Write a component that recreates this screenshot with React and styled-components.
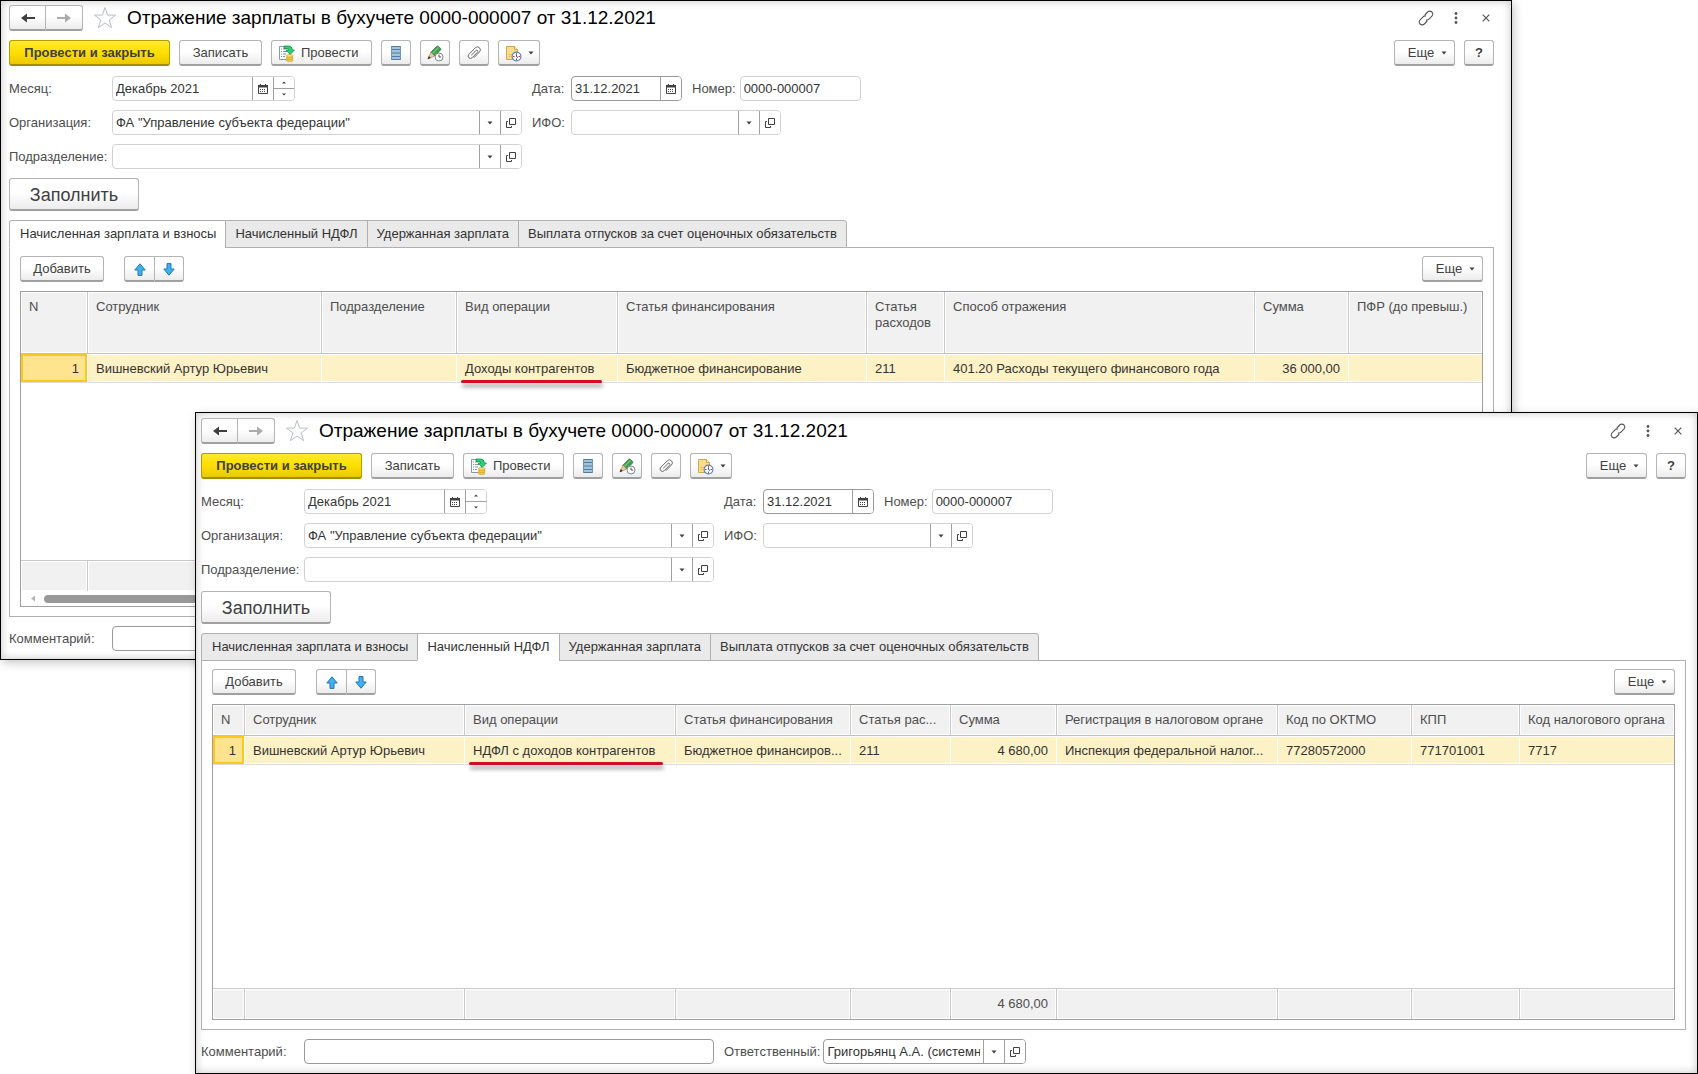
import styled, { createGlobalStyle, css } from "styled-components";

const GlobalStyle = createGlobalStyle`
  * {
    box-sizing: border-box;
  }
  body {
    margin: 0;
    background: #fff;
    color: #404040;
    font-family: "Liberation Sans", Arial, sans-serif;
    font-size: 13px;
    line-height: 16px;
  }
  button,
  input {
    font: inherit;
    color: inherit;
    margin: 0;
  }
`;

const Desktop = styled.main`
  position: relative;
  height: 100vh;
  min-height: 900px;
  overflow: hidden;
`;

const WindowFrame = styled.section`
  position: absolute;
  display: flex;
  flex-direction: column;
  background: #fff;
  border: 1px solid #000;
  box-shadow: inset 0 0 9px rgba(70, 60, 70, 0.3), 2px 3px 9px rgba(0, 0, 0, 0.22);
  ${(p) =>
    p.$front
      ? css`
          inset: 412px 0 0 195px;
          padding: 6px 11px 9px 5px;
        `
      : css`
          inset: 0 186px 414px 0;
          padding: 5px 17px 8px 8px;
        `}
`;

const TitleBar = styled.header`
  display: flex;
  align-items: center;
  height: 24px;
  margin-bottom: 10px;
`;

const Title = styled.h1`
  flex: 1;
  margin: 0;
  color: #000;
  font-size: 19px;
  font-weight: 400;
  line-height: 24px;
`;

const WindowTools = styled.div`
  display: flex;
  align-items: center;
  gap: 8px;
  margin-right: -3px;
`;

const PlainButton = styled.button`
  display: flex;
  align-items: center;
  justify-content: center;
  width: ${(p) => p.$width || 22}px;
  height: 22px;
  padding: 0;
  border: 0;
  background: none;
`;

const Button = styled.button`
  display: flex;
  align-items: center;
  justify-content: center;
  gap: ${(p) => p.$gap || 6}px;
  width: ${(p) => p.$width}px;
  height: 26px;
  padding: 1px 0 0 0;
  border: 1px solid #b4b4b4;
  border-bottom: 2px solid #a0a0a0;
  border-radius: 3px;
  background: linear-gradient(#fff 45%, #ececec);
  color: #404040;
  white-space: nowrap;
`;

const PrimaryButton = styled(Button)`
  border-color: #b39b00;
  border-bottom-color: #a38c00;
  background: linear-gradient(#ffea2e, #ffdf00 50%, #ecc900);
  font-weight: 700;
`;

const PostButton = styled(Button)`
  justify-content: flex-start;
  padding-left: 6px;
`;

const MenuButton = styled(Button)`
  padding-left: 6px;
`;

const FillButton = styled(Button)`
  height: 33px;
  margin: 9px 0;
  font-size: 18px;
`;

const ButtonPair = styled.div`
  display: flex;
  margin-left: ${(p) => p.$indent || 0}px;

  ${Button}:first-child {
    border-radius: 3px 0 0 3px;
  }
  ${Button}:last-child {
    border-left: 0;
    border-radius: 0 3px 3px 0;
  }
`;

const CommandBar = styled.div`
  display: flex;
  gap: 9px;
  margin-bottom: ${(p) => p.$bottom || 10}px;
`;

const Spacer = styled.div`
  flex: 1;
`;

const FormGrid = styled.div`
  display: grid;
  grid-template-columns: 103px 420px 39px auto;
  row-gap: 9px;
  align-items: center;
  justify-content: start;
`;

const FieldGroup = styled.div`
  display: flex;
  align-items: center;

  ${() => Label} {
    margin: 0 4px 0 10px;
  }
`;

const Label = styled.label`
  color: #4d4d4d;
  white-space: nowrap;
`;

const Field = styled.div`
  display: flex;
  width: ${(p) => p.$width}px;
  height: 25px;
  border: 1px solid ${(p) => (p.$dark ? "#9a9a9a" : "#d2d2d2")};
  border-radius: 4px;
  background: #fff;
  overflow: hidden;
`;

const TextInput = styled.input`
  flex: 1;
  min-width: 0;
  padding: 0 3px;
  border: 0;
  outline: 0;
  background: none;
  color: #333;
`;

const FieldButton = styled.button`
  display: flex;
  align-items: center;
  justify-content: center;
  width: 21px;
  padding: 0;
  border: 0;
  border-left: 1px solid #a0a0a0;
  background: #fff;
`;

const Spinner = styled.div`
  display: flex;
  flex-direction: column;
  width: 21px;
  border-left: 1px solid #a0a0a0;
`;

const SpinButton = styled.button`
  display: flex;
  flex: 1;
  align-items: center;
  justify-content: center;
  padding: 0;
  border: 0;
  background: #fff;

  & + & {
    border-top: 1px solid #a0a0a0;
  }
`;

const Tabs = styled.div`
  display: flex;
  margin-bottom: -1px;
  z-index: 1;
`;

const Tab = styled.button`
  height: 28px;
  padding: 0 9px 0 10px;
  border: 1px solid #b0b0b0;
  border-bottom-color: ${(p) => (p.$active ? "#fff" : "#b0b0b0")};
  background: ${(p) => (p.$active ? "#fff" : "#eaeaea")};
  color: #333;
  white-space: nowrap;

  & + & {
    margin-left: -1px;
    padding-left: 9px;
  }
  &:first-child {
    border-top-left-radius: 3px;
  }
  &:last-child {
    border-top-right-radius: 3px;
  }
`;

const Panel = styled.div`
  display: flex;
  flex: 1;
  flex-direction: column;
  min-height: 0;
  padding: 8px 10px 9px;
  border: 1px solid #b0b0b0;
`;

const TableBox = styled.div`
  display: flex;
  flex: 1;
  flex-direction: column;
  min-height: 0;
  border: 1px solid #a0a0a0;
`;

const TableArea = styled.div`
  flex: 1;
  min-height: 0;
`;

const Table = styled.table`
  width: 100%;
  height: 100%;
  border-collapse: separate;
  border-spacing: 0;
  table-layout: fixed;
`;

const cell = css`
  padding: 0 8px;
  overflow: hidden;
  text-align: left;
  font-weight: 400;

  &:last-child {
    border-right: 0;
  }
`;

const HeadCell = styled.th`
  ${cell}
  height: ${(p) => p.$height}px;
  padding-top: 7px;
  border-right: 1px solid #c8c8c8;
  border-bottom: 1px solid #c0c0c0;
  background: #f1f1f1;
  box-shadow: inset 0 0 0 1px #fff;
  color: #4d4d4d;
  vertical-align: top;
  white-space: ${(p) => (p.$wrap ? "normal" : "nowrap")};
`;

const Cell = styled.td`
  ${cell}
  height: 29px;
  padding-top: 2px;
  border-right: 1px solid #fff;
  border-bottom: 1px solid #dcdce0;
  background: #fdf1c6;
  box-shadow: inset 0 1px #fff, inset 0 -1px #fff;
  color: #333;
  text-align: ${(p) => (p.$right ? "right" : "left")};
  white-space: nowrap;
  ${(p) => p.$marked && "overflow: visible;"}
  ${(p) =>
    p.$selected &&
    css`
      background: #ffe48f;
      box-shadow: inset 0 0 0 2px #fcc71f;
      text-align: right;
    `}
`;

const EmptyCell = styled.td`
  padding: 0;
`;

const FootCell = styled.td`
  ${cell}
  height: 31px;
  border-top: 1px solid #c8c8c8;
  border-right: 1px solid #c8c8c8;
  background: #f1f1f1;
  box-shadow: inset 0 0 0 1px #fff;
  color: #4d4d4d;
  text-align: right;
`;

// Red pen stroke drawn under the highlighted operation
const Marked = styled.span`
  position: relative;

  &::after {
    content: "";
    position: absolute;
    left: -4px;
    right: -8px;
    bottom: -7px;
    height: 3px;
    border-radius: 2px;
    background: #d40d27;
    box-shadow: 1px 4px 4px rgba(0, 0, 0, 0.4);
  }
`;

const ScrollRow = styled.div`
  display: flex;
  align-items: center;
  gap: 9px;
  height: 15px;
  padding: 0 10px;
`;

const ScrollThumb = styled.div`
  width: 75%;
  height: 8px;
  border-radius: 4px;
  background: #999;
`;

const BottomRow = styled.footer`
  display: flex;
  align-items: center;
  margin-top: 9px;

  ${Label}:first-child {
    width: 103px;
  }
  ${Label}:not(:first-child) {
    margin: 0 3px 0 10px;
  }
`;

function ArrowIcon({ back }) {
  return (
    <svg width="16" height="12" viewBox="0 0 16 12">
      <path d={back ? "M15 6H4" : "M1 6h11"} stroke={back ? "#404040" : "#ababab"} strokeWidth="2" />
      <path d={back ? "M1 6l6-4.500v9z" : "M15 6 9 1.500v9z"} fill={back ? "#404040" : "#ababab"} />
    </svg>
  );
}

function StarIcon() {
  return (
    <svg width="24" height="24" viewBox="0 0 24 24">
      <path
        d="M12 1.500l2.600 7.600h8l-6.400 4.800 2.400 7.800L12 17l-6.600 4.700 2.400-7.800L1.400 9.100h8z"
        fill="#fff"
        stroke="#b9bec6"
      />
    </svg>
  );
}

function LinkIcon() {
  return (
    <svg width="16" height="16" viewBox="0 0 16 16" fill="none" stroke="#555" strokeWidth="1.100">
      <path d="M6.800 5 9.700 2a2.900 2.900 0 0 1 4.200 0 2.900 2.900 0 0 1 0 4.200l-3 3a2.900 2.900 0 0 1-3 .7" />
      <path d="M9.200 11 6.300 14a2.900 2.900 0 0 1-4.200 0 2.900 2.900 0 0 1 0-4.200l3-3a2.900 2.900 0 0 1 3-.7" />
    </svg>
  );
}

function DotsIcon() {
  return (
    <svg width="4" height="12" viewBox="0 0 4 12" fill="#555">
      <circle cx="2" cy="1.500" r="1.400" />
      <circle cx="2" cy="6" r="1.400" />
      <circle cx="2" cy="10.500" r="1.400" />
    </svg>
  );
}

function CloseIcon() {
  return (
    <svg width="8" height="8" viewBox="0 0 8 8">
      <path d="M.7.7l6.600 6.600M7.300.7.7 7.300" stroke="#555" strokeWidth="1.200" />
    </svg>
  );
}

function PostIcon() {
  return (
    <svg width="17" height="17" viewBox="0 0 17 17">
      <path d="M1.500 1.500h10v13h-10z" fill="#fff" stroke="#8798a8" />
      <path d="M3 4h1M5 4h3M3 6.500h1M5 6.500h4M3 9h1M5 9h3M3 11.500h1M5 11.500h2" stroke="#7d92a5" />
      <path
        d="M6 1h4.500q3.800 0 3.800 4h2.200L12.200 9.500 8 5h2.800q0-1.500-1.800-1.500H6z"
        fill="#2bd174"
        stroke="#0b8f4a"
        strokeWidth=".8"
      />
      <path d="M8.500 10.500h6.500v5H8.500z" fill="#f6cf4a" />
      <ellipse cx="11.700" cy="15.200" rx="3.400" ry="1.300" fill="#f6cf4a" stroke="#c69a1c" strokeWidth=".6" />
      <ellipse cx="11.700" cy="13" rx="3.400" ry="1.300" fill="#f6cf4a" stroke="#c69a1c" strokeWidth=".6" />
      <ellipse cx="11.700" cy="10.800" rx="3.400" ry="1.300" fill="#fbe07a" stroke="#c69a1c" strokeWidth=".6" />
    </svg>
  );
}

function ListIcon() {
  return (
    <svg width="10" height="14" viewBox="0 0 10 14">
      <path d="M0 0h10v14H0z" fill="#a3c3da" />
      <path d="M0 .5h10M0 3.500h10M0 7h10M0 10.500h10M0 13.500h10" stroke="#4f7da1" />
      <path d="M.5 0v14M9.500 0v14" stroke="#6d97b8" />
    </svg>
  );
}

function PencilIcon() {
  return (
    <svg width="17" height="17" viewBox="0 0 17 17">
      <path d="M3.800 7.200 9.600 1.400a1.300 1.300 0 0 1 1.900 0l1.900 1.900a1.300 1.300 0 0 1 0 1.900L7.600 11z" fill="#3f9d4b" stroke="#2c6f36" strokeWidth=".7" />
      <path d="M5.500 8.500l6-6" stroke="#74c47c" strokeWidth="1.200" />
      <path d="M3.800 7.200 7.600 11 1 13.800z" fill="#efcf9c" stroke="#8a7652" strokeWidth=".6" />
      <path d="M.6 14.200l1.200-3.200 2 2z" fill="#333" />
      <circle cx="12" cy="12" r="4" fill="#fff" stroke="#7d8b99" />
      <path d="M12 9.500V12h2.300" fill="none" stroke="#4a5560" />
    </svg>
  );
}

function ClipIcon() {
  return (
    <svg width="14" height="14" viewBox="0 0 14 14" fill="none" stroke="#6a6a6a">
      <path d="M4.300 9.200 9 4.500a1.100 1.100 0 0 1 1.600 1.600l-5.400 5.600a2.300 2.300 0 0 1-3.400-3.300l6.500-6.600a2.900 2.900 0 0 1 4.200 4.100l-5.600 5.800" />
    </svg>
  );
}

function ReportIcon() {
  return (
    <svg width="17" height="17" viewBox="0 0 17 17">
      <path d="M1.500 1.500h8l3 3v10h-11z" fill="#f9dc8c" stroke="#d3a84a" />
      <path d="M9.500 1.500v3h3" fill="#fff3cc" stroke="#d3a84a" />
      <path d="M3.500 9.500h3M3.500 11.500h2" stroke="#e3bd62" />
      <circle cx="11.500" cy="11.500" r="4.400" fill="#fff" stroke="#5585b5" strokeWidth="1.200" />
      <path d="M11.500 8v1.500M11.500 13.500V15M8 11.500h1.500M13.500 11.500H15" stroke="#d33" />
      <path d="M11.500 9.500v2l1.500 1" fill="none" stroke="#2d5f93" />
    </svg>
  );
}

function Caret() {
  return (
    <svg width="6" height="4" viewBox="0 0 6 4">
      <path d="M.5.500h5L3 3.500z" fill="#404040" />
    </svg>
  );
}

function SmallCaret({ up }) {
  return (
    <svg width="4" height="3" viewBox="0 0 4 3">
      <path d={up ? "M0 2.500h4L2 .500z" : "M0 .500h4L2 2.500z"} fill="#404040" />
    </svg>
  );
}

function CalendarIcon() {
  return (
    <svg width="10" height="10" viewBox="0 0 10 10">
      <path d="M.5 1.500h9v8h-9z" fill="#fff" stroke="#404040" />
      <path d="M0 1h10v2.500H0zM2 0h1v2H2zM7 0h1v2H7z" fill="#404040" />
      <path d="M2 5.500h6M2 7.500h6" stroke="#404040" strokeDasharray="1 1" />
    </svg>
  );
}

function OpenIcon() {
  return (
    <svg width="10" height="10" viewBox="0 0 10 10" fill="none" stroke="#404040">
      <path d="M3.500.500h6v6h-6zM2 3.500H.5v6h5V8" />
    </svg>
  );
}

function MoveIcon({ down }) {
  return (
    <svg width="12" height="13" viewBox="0 0 12 13">
      <path
        d={
          down
            ? "M4 .600h4v5.400h3.200L6 12.200.8 6H4z"
            : "M4 12.400h4V7h3.200L6 .800.8 7H4z"
        }
        fill="#3fb2f2"
        stroke="#2377b0"
      />
    </svg>
  );
}

function ScrollArrow() {
  return (
    <svg width="4" height="7" viewBox="0 0 4 7">
      <path d="M4 .500v6L0 3.500z" fill="#b5b5b5" />
    </svg>
  );
}

function MoreButton() {
  return (
    <MenuButton type="button" $width={61} $gap={7}>
      Еще <Caret />
    </MenuButton>
  );
}

function ChoiceField({ id, value = "", width, dark }) {
  return (
    <Field $width={width} $dark={dark}>
      <TextInput id={id} defaultValue={value} />
      <FieldButton type="button" aria-label="Выбрать">
        <Caret />
      </FieldButton>
      <FieldButton type="button" aria-label="Открыть">
        <OpenIcon />
      </FieldButton>
    </Field>
  );
}

const TAB_NAMES = [
  "Начисленная зарплата и взносы",
  "Начисленный НДФЛ",
  "Удержанная зарплата",
  "Выплата отпусков за счет оценочных обязательств",
];

const SALARY_COLUMNS = [
  { title: "N", width: 67, value: "1", selected: true },
  { title: "Сотрудник", width: 234, value: "Вишневский Артур Юрьевич" },
  { title: "Подразделение", width: 135, value: "" },
  { title: "Вид операции", width: 161, value: "Доходы контрагентов", marked: true },
  { title: "Статья финансирования", width: 249, value: "Бюджетное финансирование" },
  { title: "Статья расходов", width: 78, value: "211", wrap: true },
  { title: "Способ отражения", width: 310, value: "401.20 Расходы текущего финансового года" },
  { title: "Сумма", width: 94, value: "36 000,00", right: true },
  { title: "ПФР (до превыш.)", value: "" },
];

const TAX_COLUMNS = [
  { title: "N", width: 32, value: "1", selected: true },
  { title: "Сотрудник", width: 220, value: "Вишневский Артур Юрьевич" },
  { title: "Вид операции", width: 211, value: "НДФЛ с доходов контрагентов", marked: true },
  { title: "Статья финансирования", width: 175, value: "Бюджетное финансиров..." },
  { title: "Статья рас...", width: 100, value: "211" },
  { title: "Сумма", width: 106, value: "4 680,00", right: true, total: "4 680,00" },
  { title: "Регистрация в налоговом органе", width: 221, value: "Инспекция федеральной налог..." },
  { title: "Код по ОКТМО", width: 134, value: "77280572000" },
  { title: "КПП", width: 108, value: "771701001" },
  { title: "Код налогового органа", value: "7717" },
];

function DataTable({ columns, headHeight, scroll }) {
  return (
    <TableBox>
      <TableArea>
        <Table>
          <colgroup>
            {columns.map((c) => (
              <col key={c.title} width={c.width} />
            ))}
          </colgroup>
          <thead>
            <tr>
              {columns.map((c) => (
                <HeadCell key={c.title} $height={headHeight} $wrap={c.wrap}>
                  {c.title}
                </HeadCell>
              ))}
            </tr>
          </thead>
          <tbody>
            <tr>
              {columns.map((c) => (
                <Cell key={c.title} $right={c.right} $marked={c.marked} $selected={c.selected}>
                  {c.marked ? <Marked>{c.value}</Marked> : c.value}
                </Cell>
              ))}
            </tr>
            <tr>
              <EmptyCell colSpan={columns.length} />
            </tr>
          </tbody>
          <tfoot>
            <tr>
              {columns.map((c) => (
                <FootCell key={c.title}>{c.total}</FootCell>
              ))}
            </tr>
          </tfoot>
        </Table>
      </TableArea>
      {scroll && (
        <ScrollRow>
          <ScrollArrow />
          <ScrollThumb />
        </ScrollRow>
      )}
    </TableBox>
  );
}

function DocumentWindow({ id, front, activeTab, columns, headHeight, scroll }) {
  return (
    <WindowFrame $front={front}>
      <TitleBar>
        <ButtonPair>
          <Button type="button" $width={37} aria-label="Назад">
            <ArrowIcon back />
          </Button>
          <Button type="button" $width={37} aria-label="Вперед">
            <ArrowIcon />
          </Button>
        </ButtonPair>
        <PlainButton type="button" $width={44} aria-label="В избранное">
          <StarIcon />
        </PlainButton>
        <Title>Отражение зарплаты в бухучете 0000-000007 от 31.12.2021</Title>
        <WindowTools>
          <PlainButton type="button" aria-label="Ссылка">
            <LinkIcon />
          </PlainButton>
          <PlainButton type="button" aria-label="Меню">
            <DotsIcon />
          </PlainButton>
          <PlainButton type="button" aria-label="Закрыть">
            <CloseIcon />
          </PlainButton>
        </WindowTools>
      </TitleBar>

      <CommandBar>
        <PrimaryButton type="button" $width={161}>
          Провести и закрыть
        </PrimaryButton>
        <Button type="button" $width={83}>
          Записать
        </Button>
        <PostButton type="button" $width={101}>
          <PostIcon />
          Провести
        </PostButton>
        <Button type="button" $width={30} aria-label="Движения документа">
          <ListIcon />
        </Button>
        <Button type="button" $width={30} aria-label="Исправления">
          <PencilIcon />
        </Button>
        <Button type="button" $width={30} aria-label="Файлы">
          <ClipIcon />
        </Button>
        <Button type="button" $width={42} aria-label="Отчеты">
          <ReportIcon />
          <Caret />
        </Button>
        <Spacer />
        <MoreButton />
        <Button type="button" $width={30}>
          <b>?</b>
        </Button>
      </CommandBar>

      <FormGrid>
        <Label htmlFor={`${id}-month`}>Месяц:</Label>
        <Field $width={183}>
          <TextInput id={`${id}-month`} defaultValue="Декабрь 2021" />
          <FieldButton type="button" aria-label="Календарь">
            <CalendarIcon />
          </FieldButton>
          <Spinner>
            <SpinButton type="button" aria-label="Больше">
              <SmallCaret up />
            </SpinButton>
            <SpinButton type="button" aria-label="Меньше">
              <SmallCaret />
            </SpinButton>
          </Spinner>
        </Field>
        <Label htmlFor={`${id}-date`}>Дата:</Label>
        <FieldGroup>
          <Field $width={111} $dark>
            <TextInput id={`${id}-date`} defaultValue="31.12.2021" />
            <FieldButton type="button" aria-label="Календарь">
              <CalendarIcon />
            </FieldButton>
          </Field>
          <Label htmlFor={`${id}-number`}>Номер:</Label>
          <Field $width={121}>
            <TextInput id={`${id}-number`} defaultValue="0000-000007" />
          </Field>
        </FieldGroup>

        <Label htmlFor={`${id}-org`}>Организация:</Label>
        <ChoiceField id={`${id}-org`} width={410} value={'ФА "Управление субъекта федерации"'} />
        <Label htmlFor={`${id}-ifo`}>ИФО:</Label>
        <ChoiceField id={`${id}-ifo`} width={210} />

        <Label htmlFor={`${id}-dept`}>Подразделение:</Label>
        <ChoiceField id={`${id}-dept`} width={410} />
      </FormGrid>

      <FillButton type="button" $width={130}>
        Заполнить
      </FillButton>

      <Tabs role="tablist">
        {TAB_NAMES.map((name, i) => (
          <Tab key={name} type="button" role="tab" aria-selected={i === activeTab} $active={i === activeTab}>
            {name}
          </Tab>
        ))}
      </Tabs>

      <Panel>
        <CommandBar $bottom={9}>
          <Button type="button" $width={84}>
            Добавить
          </Button>
          <ButtonPair $indent={11}>
            <Button type="button" $width={31} aria-label="Вверх">
              <MoveIcon />
            </Button>
            <Button type="button" $width={29} aria-label="Вниз">
              <MoveIcon down />
            </Button>
          </ButtonPair>
          <Spacer />
          <MoreButton />
        </CommandBar>
        <DataTable columns={columns} headHeight={headHeight} scroll={scroll} />
      </Panel>

      <BottomRow>
        <Label htmlFor={`${id}-comment`}>Комментарий:</Label>
        <Field $width={410} $dark>
          <TextInput id={`${id}-comment`} />
        </Field>
        <Label htmlFor={`${id}-user`}>Ответственный:</Label>
        <ChoiceField id={`${id}-user`} width={203} value="Григорьянц А.А. (системный)" dark />
      </BottomRow>
    </WindowFrame>
  );
}

export default function App() {
  return (
    <>
      <GlobalStyle />
      <Desktop>
        <DocumentWindow id="salary" activeTab={0} columns={SALARY_COLUMNS} headHeight={62} scroll />
        <DocumentWindow id="tax" front activeTab={1} columns={TAX_COLUMNS} headHeight={31} />
      </Desktop>
    </>
  );
}
